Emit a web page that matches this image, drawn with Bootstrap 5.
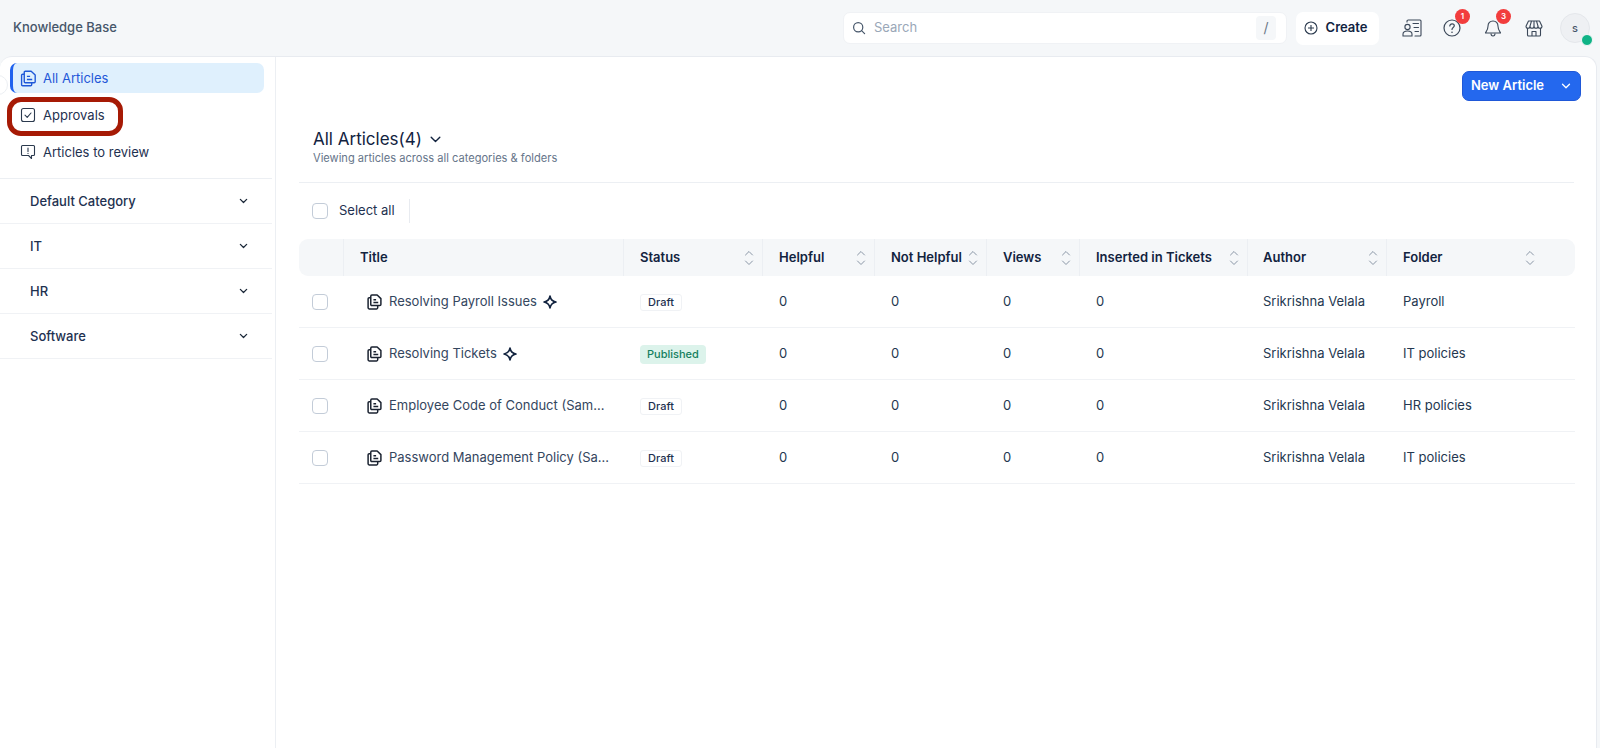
<!doctype html>
<html lang="en">
<head>
<meta charset="utf-8">
<title>Knowledge Base</title>
<link href="https://cdn.jsdelivr.net/npm/bootstrap@5.3.0/dist/css/bootstrap.min.css" rel="stylesheet">
<style>
html,body{height:100%;overflow:hidden}
body{font-family:Inter,"Liberation Sans",sans-serif;background:#f5f7f9;color:#1e3150;font-size:13px}
svg{display:block;flex:none}
.kb-top{height:56px;padding-left:13px;padding-right:10px}
.kb-brand{font-size:13px;font-weight:500;color:#46566a}
.kb-search{width:444px;height:32px;background:#fff;border-radius:7px;margin-right:9px;border:1px solid #f0f2f5;padding:0 10px 0 8px;color:#9aa7b8}
.kb-slash{width:20px;height:24px;background:#f5f7f9;border-radius:4px;color:#6b7888;font-size:14px;text-align:center;line-height:24px}
.kb-create{width:83px;height:33px;background:#fff;border-radius:7px;font-weight:600;color:#12233f;margin-right:13px;padding-right:4px}
.kb-topicon{width:41px;height:32px}
.kb-topicon.first{width:39px}
.kb-num{top:-3px;right:2px;width:15px;height:15px;border-radius:50%;background:#f23d3d;color:#fff;font-size:8px;font-weight:600;line-height:15px;text-align:center}
.kb-avatar{width:30px;height:30px;border-radius:50%;background:#eef0f3;border:1px solid #e4e7eb;color:#46566a;font-size:11px;font-weight:500;margin-left:6px;margin-right:0}
.kb-dot{width:12px;height:12px;border-radius:50%;background:#0fb386;right:-4px;bottom:-4px;border:1px solid #f5f7f9}
.kb-panel{height:692px;margin-right:3px;background:#fff;border:1px solid #e8ebf0;border-left:0;border-bottom:0;border-radius:12px 12px 0 0}
.kb-side{width:276px;border-right:1px solid #eceff3;flex:none}
.kb-navs{height:122px;padding:6px 8px 0 10px;border-bottom:1px solid #eceff3;margin-right:3px}
.kb-item{height:30px;padding-left:10px;margin-bottom:7px;color:#1e3150;border-radius:7px;gap:7px}
.kb-item span{padding-top:2px}
.kb-item.on{background:#dff0fd;color:#1f58d8;border-left:3px solid #1f62ee;padding-left:7px;gap:6px}
.kb-cat{height:45px;padding:2px 24px 0 30px;border-bottom:1px solid #f0f2f5;margin-right:3px;color:#1e3150;font-weight:500}
.kb-cat svg{margin-bottom:2px}
.kb-ring{left:7px;top:40px;width:116px;height:39px;border:5px solid #a61a05;border-radius:14px;pointer-events:none}
.kb-handle{left:-12px;top:18px;width:20px;height:20px;border:1px solid #eceff3;border-radius:50%}
.kb-main{padding:0 22px 0 23px;min-width:0}
.kb-btnrow{height:56px;padding-top:14px}
.kb-new{width:119px;height:30px;background:#2468ee;border:1px solid #1f58d8;border-radius:7px;color:#fff;font-weight:600;padding:0 9px 0 8px;margin-right:-7px}
.kb-head{padding:14px 14px 0;height:70px;border-bottom:1px solid #eceff3}
.kb-h{font-size:17px;line-height:24px;font-weight:400;color:#12233f;margin:0}
.kb-sub{font-size:11.1px;color:#66758a;line-height:15px}
.kb-sel{height:56px;padding-left:13px;padding-bottom:1px;color:#1e3150}
.kb-box{width:16px;height:16px;border:1px solid #c3ccd8;border-radius:4px;background:#fff;display:block}
.kb-sep{width:1px;height:24px;background:#e8ebf0;margin-left:14px}
.kb-sellabel{margin-left:11px}
.kb-table{table-layout:fixed;width:1276px;margin:0;font-size:13px;border-collapse:separate;border-spacing:0}
.kb-table th{height:37px;background:#f5f7f9;border:0;border-right:1px solid #eceff3;font-weight:600;color:#12233f;padding:0 8px 0 16px;vertical-align:middle}
.kb-table th:first-child{border-radius:9px 0 0 9px}
.kb-table th:last-child{border-radius:0 9px 9px 0;border-right:0}
.kb-table td{height:52px;border:0;border-bottom:1px solid #f0f2f5;padding:0 15px 0 16px;vertical-align:middle;color:#24374f;font-weight:400;background:transparent}
.kb-table th:nth-child(8),.kb-table td:nth-child(8){padding-left:15px}
.kb-table .kb-chk{padding-left:13px;padding-right:0}
.kb-ttl{padding-left:23px !important;white-space:nowrap;color:#34465e !important}
.kb-tag{display:inline-block;height:17px;line-height:15px;border:1px solid #f0f2f5;border-radius:3px;padding:0 7px;font-size:11px;font-weight:500;color:#1e3150}
.kb-tag.pub{height:19px;line-height:19px;border:0;background:#dcf3eb;color:#14805e;border-radius:4px}
.kb-sort{color:#8a96a6}
.kb-foldercell{padding-right:32px}
.kb-titlerow{gap:7px}
.kb-star{margin-left:-1px}
</style>
</head>
<body>
<header class="kb-top d-flex align-items-center">
  <div class="kb-brand me-auto">Knowledge Base</div>
  <div class="kb-search d-flex align-items-center">
    <svg width="14" height="14" viewBox="0 0 14 14" fill="none" stroke="#46566a" stroke-width="1.2" class="me-2"><circle cx="6.2" cy="6.2" r="4.6"/><path d="M9.6 9.6l3 3" stroke-linecap="round"/></svg>
    <span class="flex-grow-1">Search</span>
    <span class="kb-slash">/</span>
  </div>
  <div class="kb-create d-flex align-items-center justify-content-center gap-2">
    <svg width="14" height="14" viewBox="0 0 14 14" fill="none" stroke="#2b3a4e" stroke-width="1.1"><circle cx="7" cy="7" r="6"/><path d="M7 4v6M4 7h6"/></svg>
    <span>Create</span>
  </div>
  <div class="kb-topicon first d-flex align-items-center justify-content-center">
    <svg width="20" height="18" viewBox="0 0 20 18" fill="none" stroke="#3b4859" stroke-width="1.1" stroke-linecap="round"><path d="M5 3V2.2C5 1.500 5.500 1 6.200 1H18c.6 0 1 .4 1 1v14c0 .6-.4 1-1 1h-5"/><circle cx="5.500" cy="8" r="2.600"/><path d="M1 17v-1.800c0-2 1.800-3.200 4.500-3.200S10 13.200 10 15.200V17H1z"/><path d="M11 4.500h5.500M12 8.500h4.500M13 12.500h3.500"/></svg>
  </div>
  <div class="kb-topicon d-flex align-items-center justify-content-center position-relative">
    <svg width="18" height="18" viewBox="0 0 18 18" fill="none" stroke="#3b4859" stroke-width="1.200" stroke-linecap="round"><circle cx="9" cy="9" r="8"/><path d="M6.800 7c0-1.300 1-2.200 2.300-2.200s2.200.9 2.200 2c0 1.700-2.300 1.700-2.300 3.600"/><path d="M9 13.200v.1" stroke-width="1.600"/></svg>
    <span class="kb-num position-absolute">1</span>
  </div>
  <div class="kb-topicon d-flex align-items-center justify-content-center position-relative">
    <svg width="18" height="19" viewBox="0 0 18 19" fill="none" stroke="#3b4859" stroke-width="1.100" stroke-linejoin="round"><path d="M9 2c-3 0-5 2.200-5 5.200 0 4-2.500 6-2.500 6.800h15c0-.8-2.500-2.800-2.500-6.800C14 4.200 12 2 9 2z"/><path d="M7 14.500c0 1.400.9 2.500 2 2.500s2-1.100 2-2.500"/></svg>
    <span class="kb-num position-absolute">3</span>
  </div>
  <div class="kb-topicon d-flex align-items-center justify-content-center">
    <svg width="18" height="17" viewBox="0 0 18 17" fill="none" stroke="#3b4859" stroke-width="1.100" stroke-linejoin="round"><path d="M3.500 1h11L17 6.200c0 1.200-1 2-2 2s-2-.8-2-2c0 1.200-1 2-2 2s-2-.8-2-2c0 1.200-1 2-2 2s-2-.8-2-2c0 1.200-1 2-2 2s-2-.8-2-2L3.500 1z"/><path d="M6.500 1L5 6.200M11.500 1L13 6.200M9 1v5.200"/><path d="M2.500 8v7c0 .6.400 1 1 1h11c.6 0 1-.4 1-1V8"/><path d="M7 16v-4.500h4V16"/></svg>
  </div>
  <div class="kb-avatar d-flex align-items-center justify-content-center position-relative">s<span class="kb-dot position-absolute"></span></div>
</header>

<div class="kb-panel d-flex position-relative">
  <aside class="kb-side position-relative">
    <div class="kb-handle position-absolute"></div>
    <div class="kb-navs">
      <div class="kb-item on d-flex align-items-center">
        <svg width="17" height="17" viewBox="0 0 16 16" fill="none" stroke="#1f58d8" stroke-width="1.300" stroke-linejoin="round"><path d="M5 1.200h5.500l3.800 3.600v6.200c0 .6-.4 1-1 1H5c-.6 0-1-.4-1-1V2.200c0-.6.400-1 1-1z"/><path d="M4 4H2.500c-.7 0-1 .4-1 1v8.800c0 .6.400 1 1 1h7.500c.6 0 1-.4 1-1V12"/><path d="M6.500 6h3M6.500 9h5"/></svg>
        <span>All Articles</span>
      </div>
      <div class="kb-item d-flex align-items-center">
        <svg width="16" height="16" viewBox="0 0 16 16" fill="none" stroke="#2b3a4e" stroke-width="1.100"><rect x="1.500" y="1.500" width="13" height="13" rx="2"/><path d="M5 8.200l2.200 2.200L11 6" stroke-linecap="round" stroke-linejoin="round"/></svg>
        <span>Approvals</span>
      </div>
      <div class="kb-item d-flex align-items-center">
        <svg width="16" height="16" viewBox="0 0 16 16" fill="none" stroke="#2b3a4e" stroke-width="1.100" stroke-linejoin="round"><path d="M2.500 1.500h11c.6 0 1 .4 1 1v8c0 .6-.4 1-1 1h-2v3l-3-3h-6c-.6 0-1-.4-1-1v-8c0-.6.400-1 1-1z"/><path d="M8 4v3.500M8 9.300v.1" stroke-linecap="round"/></svg>
        <span>Articles to review</span>
      </div>
    </div>
    <div class="kb-cat d-flex align-items-center justify-content-between"><span>Default Category</span><svg width="9" height="6" viewBox="0 0 10 6" fill="none" stroke="#1a2738" stroke-width="1.400" stroke-linecap="round" stroke-linejoin="round"><path d="M1.500 1.200L5 4.700l3.500-3.500"/></svg></div>
    <div class="kb-cat d-flex align-items-center justify-content-between"><span>IT</span><svg width="9" height="6" viewBox="0 0 10 6" fill="none" stroke="#1a2738" stroke-width="1.400" stroke-linecap="round" stroke-linejoin="round"><path d="M1.500 1.200L5 4.700l3.500-3.500"/></svg></div>
    <div class="kb-cat d-flex align-items-center justify-content-between"><span>HR</span><svg width="9" height="6" viewBox="0 0 10 6" fill="none" stroke="#1a2738" stroke-width="1.400" stroke-linecap="round" stroke-linejoin="round"><path d="M1.500 1.200L5 4.700l3.500-3.500"/></svg></div>
    <div class="kb-cat d-flex align-items-center justify-content-between"><span>Software</span><svg width="9" height="6" viewBox="0 0 10 6" fill="none" stroke="#1a2738" stroke-width="1.400" stroke-linecap="round" stroke-linejoin="round"><path d="M1.500 1.200L5 4.700l3.500-3.500"/></svg></div>
    <div class="kb-ring position-absolute"></div>
  </aside>

  <main class="kb-main flex-grow-1">
    <div class="kb-btnrow d-flex justify-content-end">
      <div class="kb-new d-flex align-items-center justify-content-between"><span>New Article</span><svg width="10" height="6" viewBox="0 0 10 6" fill="none" stroke="#fff" stroke-width="1.300" stroke-linecap="round" stroke-linejoin="round"><path d="M1.500 1.200L5 4.700l3.500-3.500"/></svg></div>
    </div>
    <div class="kb-head">
      <div class="d-flex align-items-center gap-2">
        <h1 class="kb-h">All Articles(4)</h1>
        <svg width="11" height="7" viewBox="0 0 11 7" fill="none" stroke="#12233f" stroke-width="1.400" stroke-linecap="round" stroke-linejoin="round"><path d="M1.200 1.200l4.300 4.300 4.300-4.300"/></svg>
      </div>
      <div class="kb-sub">Viewing articles across all categories &amp; folders</div>
    </div>
    <div class="kb-sel d-flex align-items-center">
      <span class="kb-box"></span><span class="kb-sellabel">Select all</span><span class="kb-sep"></span>
    </div>
    <table class="table kb-table">
      <colgroup>
        <col style="width:45px"><col style="width:280px"><col style="width:139px"><col style="width:112px"><col style="width:112px"><col style="width:93px"><col style="width:168px"><col style="width:139px"><col>
      </colgroup>
      <thead>
        <tr>
          <th></th>
          <th>Title</th>
          <th><div class="d-flex justify-content-between align-items-center"><span>Status</span><svg class="kb-sort" width="10" height="16" viewBox="0 0 10 16" fill="none" stroke="currentColor" stroke-width="1" stroke-linecap="round" stroke-linejoin="round"><path d="M1.500 5L5 1.500 8.500 5M1.500 11L5 14.500 8.500 11"/></svg></div></th>
          <th><div class="d-flex justify-content-between align-items-center"><span>Helpful</span><svg class="kb-sort" width="10" height="16" viewBox="0 0 10 16" fill="none" stroke="currentColor" stroke-width="1" stroke-linecap="round" stroke-linejoin="round"><path d="M1.500 5L5 1.500 8.500 5M1.500 11L5 14.500 8.500 11"/></svg></div></th>
          <th><div class="d-flex justify-content-between align-items-center"><span>Not Helpful</span><svg class="kb-sort" width="10" height="16" viewBox="0 0 10 16" fill="none" stroke="currentColor" stroke-width="1" stroke-linecap="round" stroke-linejoin="round"><path d="M1.500 5L5 1.500 8.500 5M1.500 11L5 14.500 8.500 11"/></svg></div></th>
          <th><div class="d-flex justify-content-between align-items-center"><span>Views</span><svg class="kb-sort" width="10" height="16" viewBox="0 0 10 16" fill="none" stroke="currentColor" stroke-width="1" stroke-linecap="round" stroke-linejoin="round"><path d="M1.500 5L5 1.500 8.500 5M1.500 11L5 14.500 8.500 11"/></svg></div></th>
          <th><div class="d-flex justify-content-between align-items-center"><span>Inserted in Tickets</span><svg class="kb-sort" width="10" height="16" viewBox="0 0 10 16" fill="none" stroke="currentColor" stroke-width="1" stroke-linecap="round" stroke-linejoin="round"><path d="M1.500 5L5 1.500 8.500 5M1.500 11L5 14.500 8.500 11"/></svg></div></th>
          <th><div class="d-flex justify-content-between align-items-center"><span>Author</span><svg class="kb-sort" width="10" height="16" viewBox="0 0 10 16" fill="none" stroke="currentColor" stroke-width="1" stroke-linecap="round" stroke-linejoin="round"><path d="M1.500 5L5 1.500 8.500 5M1.500 11L5 14.500 8.500 11"/></svg></div></th>
          <th><div class="kb-foldercell d-flex justify-content-between align-items-center"><span>Folder</span><svg class="kb-sort" width="10" height="16" viewBox="0 0 10 16" fill="none" stroke="currentColor" stroke-width="1" stroke-linecap="round" stroke-linejoin="round"><path d="M1.500 5L5 1.500 8.500 5M1.500 11L5 14.500 8.500 11"/></svg></div></th>
        </tr>
      </thead>
      <tbody>
        <tr>
          <td class="kb-chk"><span class="kb-box"></span></td>
          <td class="kb-ttl"><div class="kb-titlerow d-flex align-items-center"><svg width="15" height="16" viewBox="0 0 14 15" fill="none" stroke="#1a2230" stroke-width="1.400" stroke-linejoin="round"><path d="M4.500 1h5l3.500 3.300V9.800c0 .6-.4 1-1 1H4.500c-.6 0-1-.4-1-1V2c0-.6.400-1 1-1z"/><path d="M3.500 3.500H2c-.6 0-1 .4-1 1v8.500c0 .6.400 1 1 1h7c.6 0 1-.4 1-1v-2"/><path d="M6 5.500h2.500M6 8h4.500"/></svg><span>Resolving Payroll Issues</span><svg class="kb-star" width="14" height="14" viewBox="0 0 13 13" fill="none" stroke="#12233f" stroke-width="1.600" stroke-linejoin="round"><path d="M6.500 1c.6 3.200 2 4.800 5.500 5.500-3.500.7-4.900 2.300-5.500 5.500C5.900 8.800 4.500 7.200 1 6.500 4.500 5.800 5.900 4.200 6.500 1z"/></svg></div></td>
          <td><span class="kb-tag">Draft</span></td><td>0</td><td>0</td><td>0</td><td>0</td><td>Srikrishna Velala</td><td>Payroll</td>
        </tr>
        <tr>
          <td class="kb-chk"><span class="kb-box"></span></td>
          <td class="kb-ttl"><div class="kb-titlerow d-flex align-items-center"><svg width="15" height="16" viewBox="0 0 14 15" fill="none" stroke="#1a2230" stroke-width="1.400" stroke-linejoin="round"><path d="M4.500 1h5l3.500 3.300V9.800c0 .6-.4 1-1 1H4.500c-.6 0-1-.4-1-1V2c0-.6.400-1 1-1z"/><path d="M3.500 3.500H2c-.6 0-1 .4-1 1v8.500c0 .6.400 1 1 1h7c.6 0 1-.4 1-1v-2"/><path d="M6 5.500h2.500M6 8h4.500"/></svg><span>Resolving Tickets</span><svg class="kb-star" width="14" height="14" viewBox="0 0 13 13" fill="none" stroke="#12233f" stroke-width="1.600" stroke-linejoin="round"><path d="M6.500 1c.6 3.200 2 4.800 5.500 5.500-3.500.7-4.900 2.300-5.500 5.500C5.900 8.800 4.500 7.200 1 6.500 4.500 5.800 5.900 4.200 6.500 1z"/></svg></div></td>
          <td><span class="kb-tag pub">Published</span></td><td>0</td><td>0</td><td>0</td><td>0</td><td>Srikrishna Velala</td><td>IT policies</td>
        </tr>
        <tr>
          <td class="kb-chk"><span class="kb-box"></span></td>
          <td class="kb-ttl"><div class="kb-titlerow d-flex align-items-center"><svg width="15" height="16" viewBox="0 0 14 15" fill="none" stroke="#1a2230" stroke-width="1.400" stroke-linejoin="round"><path d="M4.500 1h5l3.500 3.300V9.800c0 .6-.4 1-1 1H4.500c-.6 0-1-.4-1-1V2c0-.6.400-1 1-1z"/><path d="M3.500 3.500H2c-.6 0-1 .4-1 1v8.500c0 .6.400 1 1 1h7c.6 0 1-.4 1-1v-2"/><path d="M6 5.500h2.500M6 8h4.500"/></svg><span>Employee Code of Conduct (Sam...</span></div></td>
          <td><span class="kb-tag">Draft</span></td><td>0</td><td>0</td><td>0</td><td>0</td><td>Srikrishna Velala</td><td>HR policies</td>
        </tr>
        <tr>
          <td class="kb-chk"><span class="kb-box"></span></td>
          <td class="kb-ttl"><div class="kb-titlerow d-flex align-items-center"><svg width="15" height="16" viewBox="0 0 14 15" fill="none" stroke="#1a2230" stroke-width="1.400" stroke-linejoin="round"><path d="M4.500 1h5l3.500 3.300V9.800c0 .6-.4 1-1 1H4.500c-.6 0-1-.4-1-1V2c0-.6.400-1 1-1z"/><path d="M3.500 3.500H2c-.6 0-1 .4-1 1v8.500c0 .6.400 1 1 1h7c.6 0 1-.4 1-1v-2"/><path d="M6 5.500h2.500M6 8h4.500"/></svg><span>Password Management Policy (Sa...</span></div></td>
          <td><span class="kb-tag">Draft</span></td><td>0</td><td>0</td><td>0</td><td>0</td><td>Srikrishna Velala</td><td>IT policies</td>
        </tr>
      </tbody>
    </table>
  </main>
</div>
<script src="https://cdn.jsdelivr.net/npm/bootstrap@5.3.0/dist/js/bootstrap.bundle.min.js"></script>
</body>
</html>
